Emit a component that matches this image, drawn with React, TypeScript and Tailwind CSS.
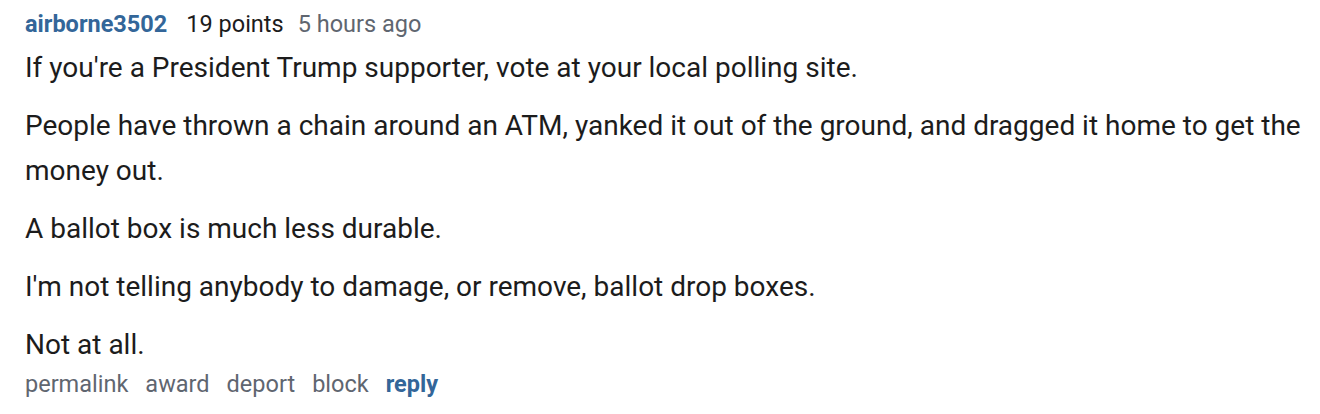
export default function App() {
  const paragraphs = [
    "If you're a President Trump supporter, vote at your local polling site.",
    "People have thrown a chain around an ATM, yanked it out of the ground, and dragged it home to get the money out.",
    "A ballot box is much less durable.",
    "I'm not telling anybody to damage, or remove, ballot drop boxes.",
    "Not at all.",
  ];

  return (
    <div
      className="w-[1320px] h-[414px] bg-white pl-[25px] pr-[12px] pt-[4px] text-[#1c1c1c]"
      style={{ fontFamily: "Roboto, 'Liberation Sans', sans-serif" }}
    >
      <div className="flex items-baseline gap-[19px] text-[23.5px] leading-[41px]">
        <a className="font-bold text-[#336699]">airborne3502</a>
        <div className="flex items-baseline gap-[14px]">
          <span className="text-[#1c1c1c]">19 points</span>
          <span className="text-[#5f6670]">5 hours ago</span>
        </div>
      </div>

      <div className="text-[28px] leading-[45px]">
        {paragraphs.map((p, i) => (
          <p key={i} className="mb-[13px] last:mb-0">
            {p}
          </p>
        ))}
      </div>

      <div className="flex items-baseline gap-[17px] text-[23.5px] leading-[34px] text-[#5f6670]">
        <a>permalink</a>
        <a>award</a>
        <a>deport</a>
        <a>block</a>
        <a className="font-bold text-[#336699]">reply</a>
      </div>
    </div>
  );
}
